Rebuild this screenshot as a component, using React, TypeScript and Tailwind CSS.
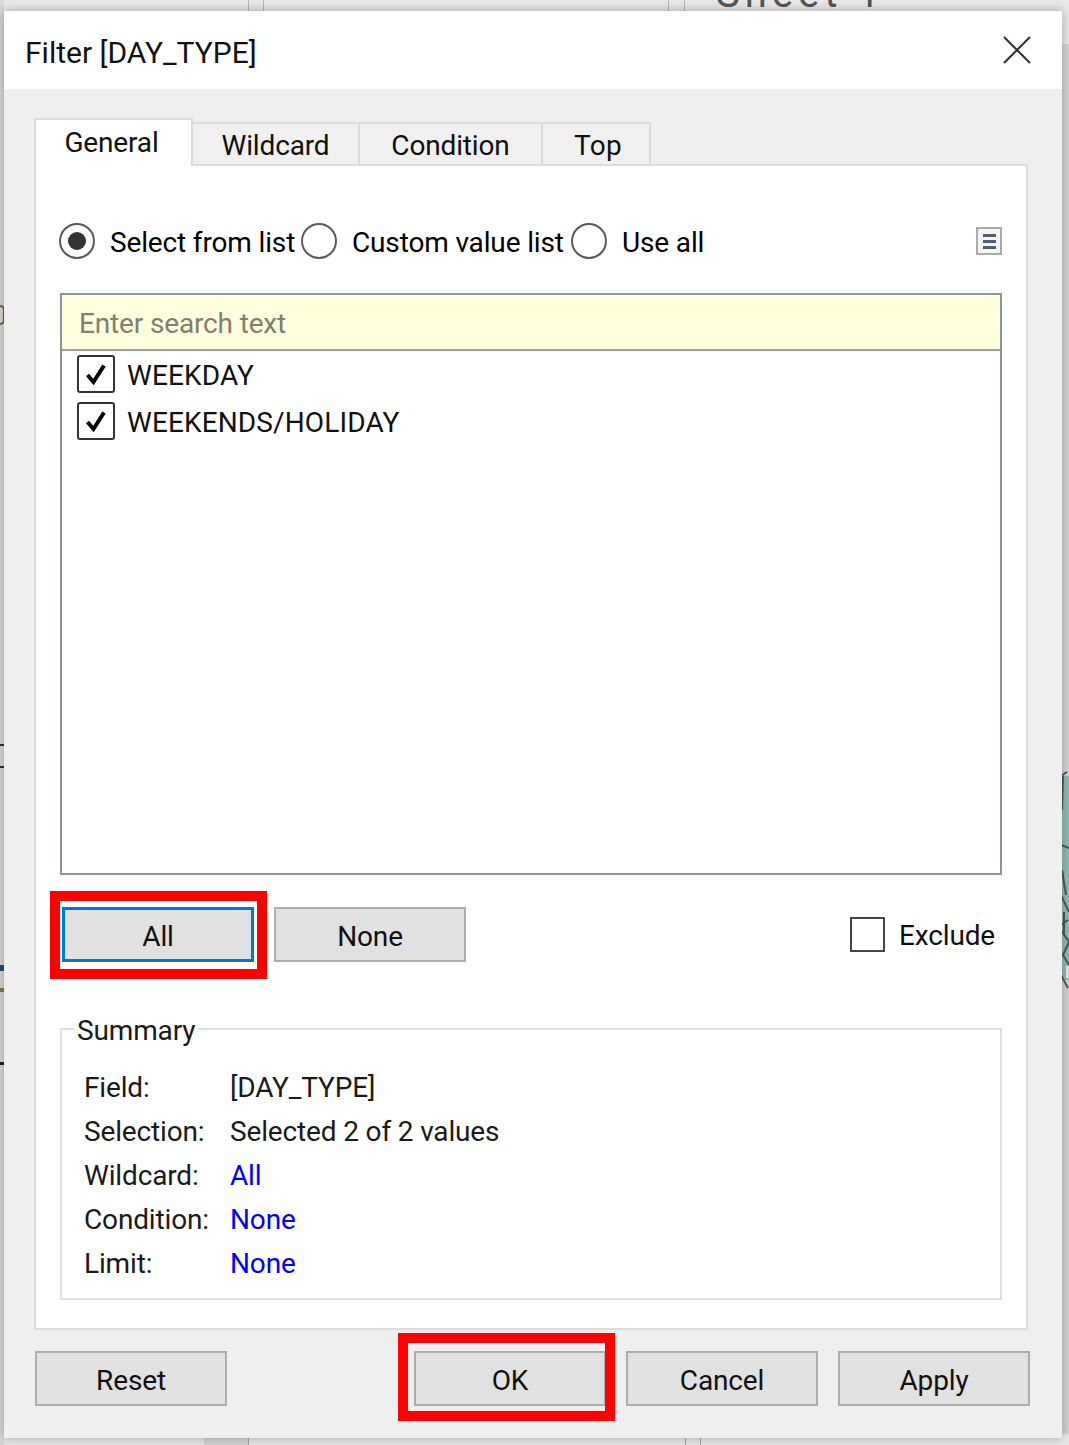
import type { ReactNode } from 'react'

const font = "font-['Roboto','Noto_Sans',sans-serif]"

function Radio({ checked }: { checked?: boolean }) {
  return (
    <span className="flex h-[36px] w-[36px] shrink-0 items-center justify-center rounded-full border-2 border-[#5a5a5a] bg-white">
      {checked && <span className="h-[18px] w-[18px] rounded-full bg-[#333333]" />}
    </span>
  )
}

function CheckBox() {
  return (
    <span className="flex h-[38px] w-[38px] shrink-0 items-center justify-center rounded-[3px] border-2 border-[#333333] bg-white">
      <svg width="24" height="24" viewBox="0 0 24 24" fill="none">
        <path d="M3.5 13 L9.5 20 L20 3.5" stroke="#000" strokeWidth="4" />
      </svg>
    </span>
  )
}

function Btn({ children, focused, className = '' }: { children: ReactNode; focused?: boolean; className?: string }) {
  return (
    <button
      className={`flex h-[55px] w-[192px] items-center justify-center bg-[#e1e1e1] pt-[4px] text-[#111111] ${
        focused ? 'border-[3px] border-[#0078d7]' : 'border-2 border-[#adadad]'
      } ${className}`}
    >
      {children}
    </button>
  )
}

function Tab({ label, active, className = '' }: { label: string; active?: boolean; className?: string }) {
  return active ? (
    <div className={`relative z-10 -mb-[2px] flex h-[48px] items-center justify-center border-x-2 border-t-2 border-[#dcdcdc] bg-white pr-[4px] pb-px text-[#111111] ${className}`}>
      {label}
    </div>
  ) : (
    <div className={`flex h-[42px] items-center justify-center border-t-2 border-r-2 border-[#dcdcdc] bg-[#f0f0f0] pt-[3px] text-[#111111] ${className}`}>
      {label}
    </div>
  )
}

function SummaryRow({ label, value, link }: { label: string; value: string; link?: boolean }) {
  return (
    <div className="flex h-[44px] items-center">
      <span className="w-[146px] shrink-0 text-[#1a1a1a]">{label}</span>
      <span className={link ? 'text-[#0000ff]' : 'text-[#1a1a1a]'}>{value}</span>
    </div>
  )
}

export default function App() {
  return (
    <div className={`relative h-[1445px] w-[1069px] overflow-hidden bg-[#e8e8e8] text-[28px] leading-none tracking-[-0.15px] ${font}`}>
      {/* window behind the dialog */}
      <div className="absolute top-0 left-[248px] h-[12px] w-px bg-[#b5b5b5]" />
      <div className="absolute top-0 left-[263px] h-[12px] w-px bg-[#b5b5b5]" />
      <div className="absolute top-0 left-[668px] h-[12px] w-px bg-[#b5b5b5]" />
      <div className="absolute top-0 left-[684px] h-[12px] w-px bg-[#b5b5b5]" />
      <div className="absolute bottom-0 left-[204px] h-[8px] w-[44px] bg-[#d4d4d4]" />
      <div className="absolute bottom-0 left-[248px] h-[8px] w-px bg-[#a5a5a5]" />
      <div className="absolute bottom-0 left-[685px] h-[8px] w-px bg-[#a5a5a5]" />
      <div className="absolute bottom-0 left-[700px] h-[8px] w-px bg-[#a5a5a5]" />
      <div className="absolute top-0 left-0 h-full w-[4px] bg-[#d8d8d8]" />
      <div className="absolute top-[44px] right-0 h-[1390px] w-[7px] bg-[#d4d4d4]" />
      <div className="absolute top-[-26px] left-[716px] text-[40px] leading-none tracking-[5px] text-[#555555]">Sheet 1</div>

      {/* stray marks of the window behind, left edge */}
      <div className="absolute top-[305px] left-0 h-[20px] w-[5px] rounded-r-full border-y-2 border-r-2 border-[#7a5a30]" />
      <div className="absolute top-[744px] left-0 h-[2px] w-[5px] bg-[#333333]" />
      <div className="absolute top-[766px] left-0 h-[2px] w-[5px] bg-[#333333]" />
      <div className="absolute top-[965px] left-0 h-[6px] w-[5px] bg-[#2a4a70]" />
      <div className="absolute top-[988px] left-0 h-[4px] w-[4px] bg-[#8a7a50]" />
      <div className="absolute top-[1062px] left-0 h-[3px] w-[5px] bg-[#222222]" />

      {/* map behind the dialog, right edge */}
      <svg className="absolute top-[770px] right-0" width="8" height="230" viewBox="0 0 8 230" fill="none">
        <rect x="0" y="6" width="8" height="204" fill="#8fbcb5" />
        <path
          d="M0 6 L6 2 M2 6 L1 40 M0 75 L8 78 M1 100 L5 125 M0 155 L7 150 M0 160 L8 172 L2 185 L8 195 M0 125 L8 142 M3 142 L3 165 M0 205 L7 218"
          stroke="#4a5a5c"
          strokeWidth="2"
        />
        <rect x="5" y="196" width="3" height="12" fill="#e8e8e8" />
      </svg>

      {/* dialog */}
      <div className="relative mt-[11px] ml-[4px] flex h-[1427px] w-[1058px] flex-col bg-[#efefef] shadow-[0_0_10px_rgba(0,0,0,0.3)]">
        <div className="flex h-[78px] shrink-0 items-center justify-between bg-white pr-[31px] pl-[21px]">
          <span className="pt-[5px] text-[30px] tracking-normal text-[#111111]">Filter [DAY_TYPE]</span>
          <svg width="28" height="28" viewBox="0 0 28 28" className="-mt-[1px]">
            <path d="M1 1 L27 27 M27 1 L1 27" stroke="#333333" strokeWidth="2" />
          </svg>
        </div>

        <div className="flex flex-col px-[30px] pt-[29px]">
          <div className="flex items-end">
            <Tab label="General" active className="w-[159px]" />
            <Tab label="Wildcard" className="w-[167px]" />
            <Tab label="Condition" className="w-[183px]" />
            <Tab label="Top" className="w-[108px] pl-[4px] tracking-[0.3px]" />
          </div>

          <div className="flex h-[1166px] w-[994px] flex-col border-2 border-[#dcdcdc] bg-white px-[24px]">
            <div className="mt-[56px] -ml-px flex h-[38px] items-center">
              <Radio checked />
              <span className="ml-[15px] w-[191px] pt-[4px]">Select from list</span>
              <Radio />
              <span className="ml-[15px] w-[219px] pt-[4px]">Custom value list</span>
              <Radio />
              <span className="ml-[15px] pt-[4px]">Use all</span>
              <span className="ml-auto flex h-[28px] w-[26px] flex-col items-center justify-center gap-[3px] border-2 border-[#ababab] bg-[#f4f4f4]">
                <span className="h-[3px] w-[13px] bg-[#4f6070]" />
                <span className="h-[3px] w-[13px] bg-[#4f6070]" />
                <span className="h-[3px] w-[13px] bg-[#4f6070]" />
              </span>
            </div>

            <div className="mt-[33px] flex h-[582px] flex-col border-2 border-[#8f939a]">
              <div className="flex h-[56px] shrink-0 items-center border-b-2 border-[#9a9ea5] bg-[#ffffdd] pt-[4px] pl-[17px] text-[#808070]">
                Enter search text
              </div>
              <div className="flex items-center pt-[4px] pl-[15px]">
                <CheckBox />
                <span className="ml-[12px] pt-[4px] tracking-[0.12px] text-[#111111]">WEEKDAY</span>
              </div>
              <div className="flex items-center pt-[9px] pl-[15px]">
                <CheckBox />
                <span className="ml-[12px] pt-[4px] tracking-[0.12px] text-[#111111]">WEEKENDS/HOLIDAY</span>
              </div>
            </div>

            <div className="mt-[32px] flex h-[55px] items-center">
              <Btn focused className="ml-[2px]">All</Btn>
              <Btn className="ml-[20px]">None</Btn>
              <span className="ml-[384px] h-[35px] w-[35px] border-2 border-[#444444] bg-white" />
              <span className="ml-[14px] pt-[2px] text-[#111111]">Exclude</span>
            </div>

            <fieldset className="mt-[51px] h-[287px] border-2 border-[#e0e0e0] pt-[21px] pl-[22px]">
              <legend className="-ml-[10px] px-[3px] pt-[4px] text-[#1a1a1a]">Summary</legend>
              <SummaryRow label="Field:" value="[DAY_TYPE]" />
              <SummaryRow label="Selection:" value="Selected 2 of 2 values" />
              <SummaryRow label="Wildcard:" value="All" link />
              <SummaryRow label="Condition:" value="None" link />
              <SummaryRow label="Limit:" value="None" link />
            </fieldset>
          </div>

          <div className="mt-[21px] flex">
            <Btn className="ml-px">Reset</Btn>
            <Btn className="ml-[187px]">OK</Btn>
            <Btn className="ml-[20px]">Cancel</Btn>
            <Btn className="ml-[20px]">Apply</Btn>
          </div>
        </div>
      </div>

      {/* annotation boxes */}
      <div className="absolute top-[891px] left-[50px] h-[88px] w-[217px] border-[10px] border-[#ff0000]" />
      <div className="absolute top-[1333px] left-[398px] h-[88px] w-[217px] border-[10px] border-[#ff0000]" />
    </div>
  )
}
